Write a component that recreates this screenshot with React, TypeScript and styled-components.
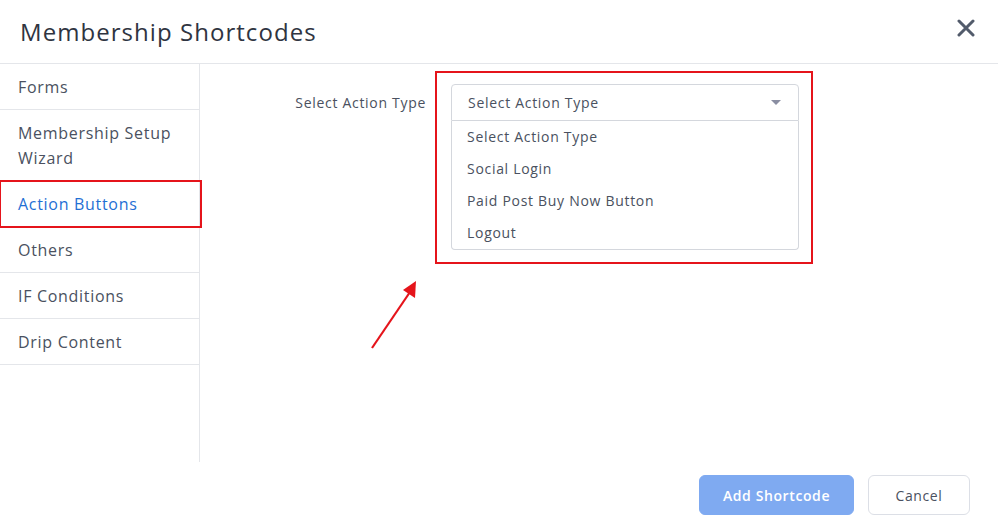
import styled, { createGlobalStyle } from 'styled-components';

const GlobalStyle = createGlobalStyle`
  html, body {
    margin: 0;
    padding: 0;
    background: #ffffff;
  }
  body {
    font-family: "Open Sans", "Liberation Sans", sans-serif;
    color: #4a5160;
    letter-spacing: 0.7px;
  }
`;

const Modal = styled.div`
  width: 998px;
  height: 528px;
  display: flex;
  flex-direction: column;
  background: #ffffff;
  overflow: hidden;
`;

const Header = styled.div`
  height: 64px;
  flex: 0 0 64px;
  box-sizing: border-box;
  border-bottom: 1px solid #e4e6ea;
  display: flex;
  align-items: center;
  justify-content: space-between;
  padding: 0 20px;
`;

const Title = styled.h2`
  margin: 0;
  font-size: 24px;
  font-weight: 400;
  color: #2f3441;
  letter-spacing: 1.05px;
`;

const CloseButton = styled.button`
  border: none;
  background: none;
  padding: 0;
  width: 20px;
  height: 20px;
  margin-right: 2px;
  margin-top: -8px;
  cursor: pointer;
  display: flex;
  align-items: center;
  justify-content: center;
`;

const Body = styled.div`
  display: flex;
  height: 398px;
  flex: 0 0 398px;
`;

const Sidebar = styled.nav`
  width: 200px;
  box-sizing: border-box;
  border-right: 1px solid #e4e6ea;
  display: flex;
  flex-direction: column;
`;

const NavItem = styled.div<{ $active?: boolean }>`
  padding: 11px 18px 9px;
  font-size: 16px;
  line-height: 25px;
  border-bottom: 1px solid ${p => (p.$active ? '#2b4190' : '#e4e6ea')};
  color: ${p => (p.$active ? '#1f6fd4' : '#4a5160')};
  outline: ${p => (p.$active ? '2px solid #e5141b' : 'none')};
  outline-offset: -1px;
  margin-right: ${p => (p.$active ? '-2px' : '0')};
  position: relative;
  cursor: pointer;
`;

const Main = styled.div`
  flex: 1;
  position: relative;
  padding-top: 7px;
`;

const FormRow = styled.div`
  display: flex;
  align-items: flex-start;
  margin-left: 76px;
`;

const Label = styled.label`
  width: 150px;
  text-align: right;
  margin-top: 13px;
  line-height: 37px;
  font-size: 14px;
  color: #4a5160;
`;

const Highlight = styled.div`
  margin-left: 9px;
  width: 378px;
  box-sizing: border-box;
  border: 2px solid #e5141b;
  padding: 11px 12px 12px 14px;
`;

const SelectBox = styled.div`
  height: 37px;
  box-sizing: border-box;
  border: 1px solid #d4d7dd;
  border-radius: 4px 4px 0 0;
  display: flex;
  align-items: center;
  justify-content: space-between;
  padding: 0 17px 0 16px;
  font-size: 14px;
  color: #4a5160;
`;

const Caret = styled.span`
  width: 0;
  height: 0;
  border-left: 5px solid transparent;
  border-right: 5px solid transparent;
  border-top: 5px solid #8a8ea2;
`;

const OptionList = styled.ul`
  list-style: none;
  margin: 0;
  padding: 0;
  border: 1px solid #d4d7dd;
  border-top: none;
  border-radius: 0 0 4px 4px;
`;

const Option = styled.li`
  height: 32px;
  line-height: 32px;
  padding-left: 15px;
  font-size: 14px;
  color: #4a5160;
`;

const Arrow = styled.svg`
  position: absolute;
  left: 165px;
  top: 213px;
`;

const Footer = styled.div`
  flex: 1;
  display: flex;
  justify-content: flex-end;
  align-items: center;
  gap: 14px;
  padding: 0 28px 0 0;
`;

const Button = styled.button<{ $primary?: boolean }>`
  height: 40px;
  box-sizing: border-box;
  border-radius: 6px;
  font-family: inherit;
  font-size: 14px;
  letter-spacing: 0.6px;
  cursor: pointer;
  padding: 0;
  border: 1px solid ${p => (p.$primary ? '#7faaf1' : '#dcdfe6')};
  background: ${p => (p.$primary ? '#7faaf1' : '#ffffff')};
  color: ${p => (p.$primary ? '#ffffff' : '#4a5160')};
  font-weight: ${p => (p.$primary ? 600 : 400)};
  width: ${p => (p.$primary ? '155px' : '102px')};
`;

const navItems = [
  'Forms',
  'Membership Setup Wizard',
  'Action Buttons',
  'Others',
  'IF Conditions',
  'Drip Content',
];

const options = ['Select Action Type', 'Social Login', 'Paid Post Buy Now Button', 'Logout'];

export default function App() {
  return (
    <>
      <GlobalStyle />
      <Modal>
        <Header>
          <Title>Membership Shortcodes</Title>
          <CloseButton aria-label="Close">
            <svg width="18" height="18" viewBox="0 0 18 18">
              <path d="M2 2 L16 16 M16 2 L2 16" stroke="#525b6b" strokeWidth="3" strokeLinecap="round" />
            </svg>
          </CloseButton>
        </Header>
        <Body>
          <Sidebar>
            {navItems.map(item => (
              <NavItem key={item} $active={item === 'Action Buttons'}>
                {item === 'Membership Setup Wizard' ? (
                  <>
                    Membership Setup
                    <br />
                    Wizard
                  </>
                ) : (
                  item
                )}
              </NavItem>
            ))}
          </Sidebar>
          <Main>
            <FormRow>
              <Label>Select Action Type</Label>
              <Highlight>
                <SelectBox>
                  <span>Select Action Type</span>
                  <Caret />
                </SelectBox>
                <OptionList>
                  {options.map(o => (
                    <Option key={o}>{o}</Option>
                  ))}
                </OptionList>
              </Highlight>
            </FormRow>
            <Arrow width="60" height="80" viewBox="0 0 60 80">
              <line x1="7" y1="71" x2="45" y2="15" stroke="#e5141b" strokeWidth="2.2" />
              <polygon points="51,4 50,21 38,13" fill="#e5141b" />
            </Arrow>
          </Main>
        </Body>
        <Footer>
          <Button $primary>Add Shortcode</Button>
          <Button>Cancel</Button>
        </Footer>
      </Modal>
    </>
  );
}
